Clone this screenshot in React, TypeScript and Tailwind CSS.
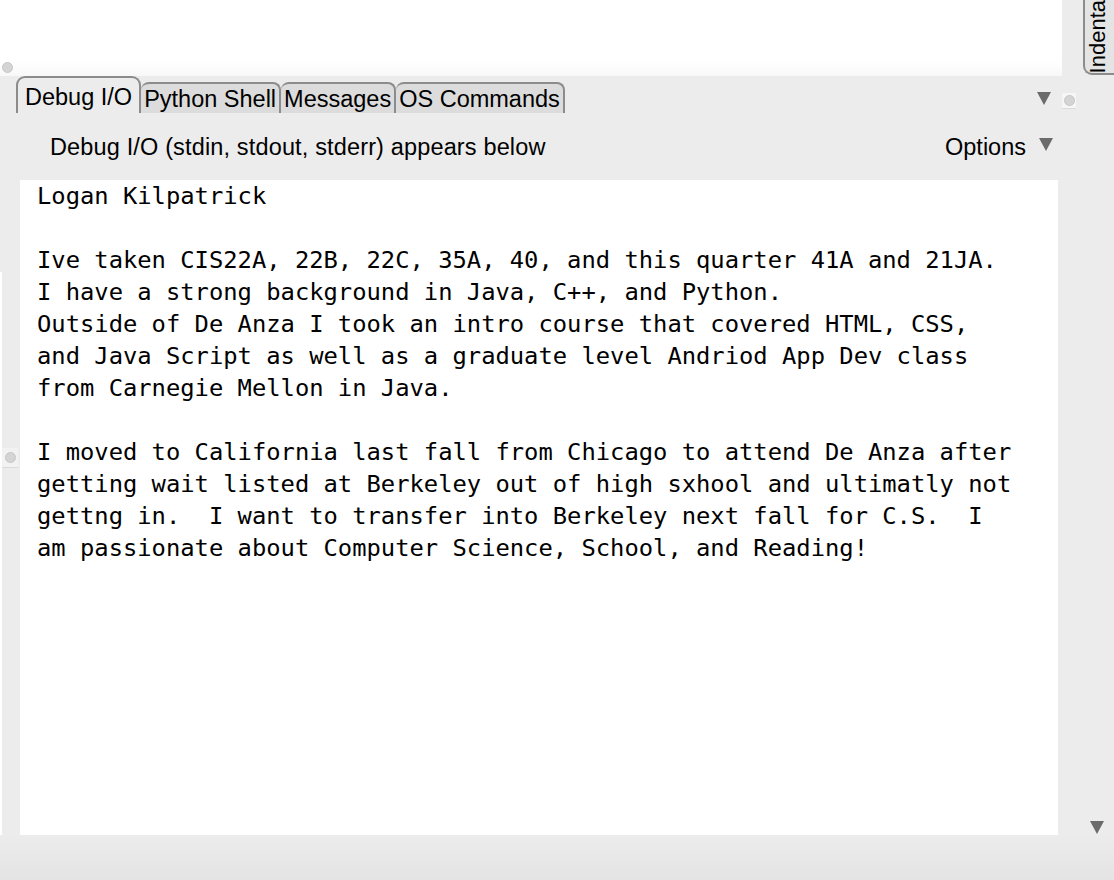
import React from "react";

const lines = [
  "Logan Kilpatrick",
  "",
  "Ive taken CIS22A, 22B, 22C, 35A, 40, and this quarter 41A and 21JA.",
  "I have a strong background in Java, C++, and Python.",
  "Outside of De Anza I took an intro course that covered HTML, CSS,",
  "and Java Script as well as a graduate level Andriod App Dev class",
  "from Carnegie Mellon in Java.",
  "",
  "I moved to California last fall from Chicago to attend De Anza after",
  "getting wait listed at Berkeley out of high sxhool and ultimatly not",
  "gettng in.  I want to transfer into Berkeley next fall for C.S.  I",
  "am passionate about Computer Science, School, and Reading!",
];

const tabs = ["Debug I/O", "Python Shell", "Messages", "OS Commands"];

const Triangle = ({ className }: { className?: string }) => (
  <svg width="16" height="16" viewBox="0 0 16 16" className={className}>
    <polygon points="1,2 15,2 8,15" fill="#6b6b6b" />
  </svg>
);

const Knob = () => (
  <div className="w-[11px] h-[11px] rounded-full bg-[#d4d4d4] border border-[#c6c6c6]" />
);

export default function App() {
  return (
    <div className="relative w-[1114px] h-[880px] overflow-hidden bg-[#ececec] font-['Liberation_Sans',Arial,sans-serif] text-black flex flex-col">
      {/* top editor remnant */}
      <div className="h-[76px] flex shrink-0">
        <div className="w-[1062px] bg-gradient-to-b from-white from-80% to-[#f8f8f8]" />
        <div className="flex-1 bg-[#ececec] flex justify-end">
          <div className="w-[31px] h-[75px] border-l-2 border-b-2 border-[#8c8c8c] rounded-bl-[9px] bg-[#e4e4e4] overflow-hidden flex items-end">
            <span className="[writing-mode:vertical-rl] rotate-180 text-[22px] leading-[26px] whitespace-nowrap pb-[3px]">
              Indenta
            </span>
          </div>
        </div>
      </div>
      <div className="absolute left-[2px] top-[62px]">
        <Knob />
      </div>

      {/* tab bar */}
      <div className="h-[37px] flex items-end shrink-0 pl-[16px] relative">
        {tabs.map((t, i) => (
          <div
            key={t}
            className={
              i === 0
                ? "h-[37px] px-[7px] flex items-center border-2 border-b-0 border-[#8c8c8c] rounded-t-[9px] bg-[#ececec] text-[23.5px] pt-[5px]"
                : "h-[31px] px-[3px] flex items-center border-2 border-b-0 border-l-0 border-[#8c8c8c] rounded-t-[8px] bg-[#dcdcdc] text-[23.5px] pt-[2px]"
            }
          >
            {t}
          </div>
        ))}
        <div className="ml-auto flex items-center gap-[10px] h-full pr-[38px]">
          <Triangle className="mt-[6px]" />
          <div className="w-[14px] h-[16px] bg-[#f6f6f6] border-b border-[#dadada] flex items-center justify-center mt-[12px]">
            <Knob />
          </div>
        </div>
      </div>

      {/* label row */}
      <div className="h-[67px] flex items-center shrink-0 pl-[50px] pr-[60px] pt-[2px] text-[23.5px]">
        <span className="tracking-[0.15px]">Debug I/O (stdin, stdout, stderr) appears below</span>
        <span className="ml-auto">Options</span>
        <Triangle className="ml-[12px] -mt-[8px]" />
      </div>

      {/* output area */}
      <div className="flex h-[655px] shrink-0">
        <div className="w-[20px] relative">
          <div className="absolute left-0 top-[92px] bottom-0 w-[2px] bg-white" />
          <div className="absolute left-[2px] top-[268px] w-[16px] h-[20px] bg-[#f2f2f2] border-b border-[#dadada] flex items-center justify-center">
            <Knob />
          </div>
        </div>
        <div className="w-[1038px] bg-white pl-[17px] font-['DejaVu_Sans_Mono',monospace] text-[23.8px] leading-[32px] whitespace-pre">
          {lines.map((l, i) => (
            <div key={i} className="h-[32px]">
              {l}
            </div>
          ))}
        </div>
        <div className="flex-1 flex flex-col justify-end items-center pl-[22px]">
          <Triangle />
        </div>
      </div>

      {/* status strip */}
      <div className="flex-1 bg-gradient-to-b from-[#ececec] to-[#e4e4e4]" />
    </div>
  );
}
